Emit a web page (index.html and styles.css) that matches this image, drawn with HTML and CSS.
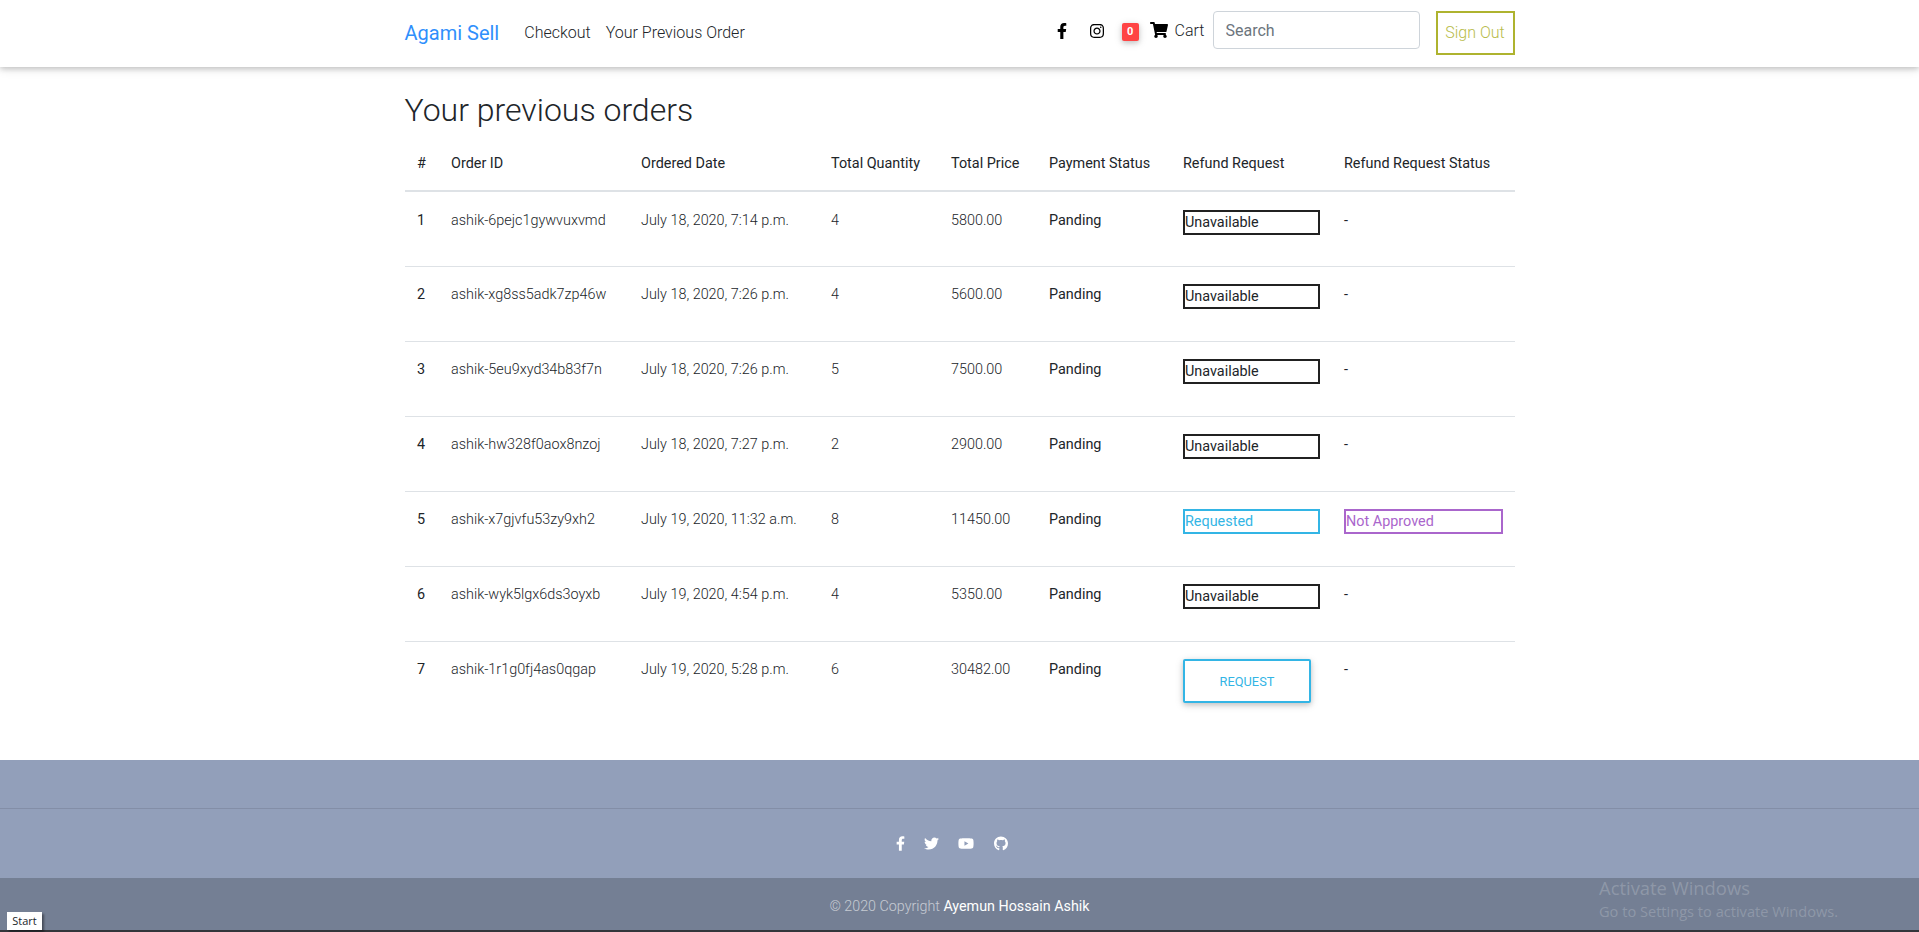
FILE: index.html
```html
<!DOCTYPE html>
<html lang="en">
<head>
    <meta charset="UTF-8">
    <meta name="viewport" content="width=device-width, initial-scale=1.0">
    <title>Your previous orders</title>
    <link rel="stylesheet" href="styles.css">
</head>
<body>
    <svg class="icon-defs" aria-hidden="true">
        <symbol id="i-facebook" viewBox="0 0 320 512"><path d="M279.14 288l14.22-92.66h-88.91v-60.13c0-25.35 12.42-50.06 52.24-50.06h40.42V6.26S260.43 0 225.36 0c-73.22 0-121.08 44.38-121.08 124.72v70.62H22.89V288h81.39v224h100.17V288z"/></symbol>
        <symbol id="i-instagram" viewBox="0 0 448 512"><path d="M224.1 141c-63.6 0-114.9 51.3-114.9 114.9s51.3 114.9 114.9 114.9S339 319.5 339 255.9 287.7 141 224.1 141zm0 189.6c-41.1 0-74.7-33.5-74.7-74.7s33.5-74.7 74.7-74.7 74.7 33.5 74.7 74.7-33.6 74.7-74.7 74.7zm146.4-194.3c0 14.9-12 26.8-26.8 26.8-14.9 0-26.8-12-26.8-26.8s12-26.8 26.8-26.8 26.8 12 26.8 26.8zm76.1 27.2c-1.7-35.9-9.9-67.7-36.2-93.9-26.2-26.2-58-34.4-93.9-36.2-37-2.1-147.9-2.1-184.9 0-35.8 1.7-67.6 9.9-93.9 36.1s-34.4 58-36.2 93.9c-2.1 37-2.1 147.9 0 184.9 1.7 35.9 9.9 67.7 36.2 93.9s58 34.4 93.9 36.2c37 2.1 147.9 2.1 184.9 0 35.9-1.7 67.7-9.9 93.9-36.2 26.2-26.2 34.4-58 36.2-93.9 2.1-37 2.1-147.8 0-184.8zM398.8 388c-7.8 19.6-22.9 34.7-42.6 42.6-29.5 11.7-99.5 9-132.1 9s-102.7 2.6-132.1-9c-19.6-7.8-34.7-22.9-42.6-42.6-11.7-29.5-9-99.5-9-132.1s-2.6-102.7 9-132.1c7.8-19.6 22.9-34.7 42.6-42.6 29.5-11.7 99.5-9 132.1-9s102.7-2.6 132.1 9c19.6 7.8 34.7 22.9 42.6 42.6 11.7 29.5 9 99.5 9 132.1s2.7 102.7-9 132.1z"/></symbol>
        <symbol id="i-cart" viewBox="0 0 576 512"><path d="M528.12 301.319l47.273-208C578.806 78.301 567.391 64 551.99 64H159.208l-9.166-44.81C147.758 8.021 137.93 0 126.529 0H24C10.745 0 0 10.745 0 24v16c0 13.255 10.745 24 24 24h69.883l70.248 343.435C147.325 417.1 136 435.222 136 456c0 30.928 25.072 56 56 56s56-25.072 56-56c0-15.674-6.447-29.835-16.824-40h209.647C430.447 426.165 424 440.326 424 456c0 30.928 25.072 56 56 56s56-25.072 56-56c0-22.172-12.888-41.332-31.579-50.405l5.517-24.276c3.413-15.018-8.002-29.319-23.403-29.319H218.117l-6.545-32h293.145c11.206 0 20.92-7.754 23.403-18.681z"/></symbol>
        <symbol id="i-twitter" viewBox="0 0 512 512"><path d="M459.37 151.716c.325 4.548.325 9.097.325 13.645 0 138.72-105.583 298.558-298.558 298.558-59.452 0-114.68-17.219-161.137-47.106 8.447.974 16.568 1.299 25.34 1.299 49.055 0 94.213-16.568 130.274-44.832-46.132-.975-84.792-31.188-98.112-72.772 6.498.974 12.995 1.624 19.818 1.624 9.421 0 18.843-1.3 27.614-3.573-48.081-9.747-84.143-51.98-84.143-102.985v-1.299c13.969 7.797 30.214 12.67 47.431 13.319-28.264-18.843-46.781-51.005-46.781-87.391 0-19.492 5.197-37.36 14.294-52.954 51.655 63.675 129.3 105.258 216.365 109.807-1.624-7.797-2.599-15.918-2.599-24.04 0-57.828 46.782-104.934 104.934-104.934 30.213 0 57.502 12.67 76.67 33.137 23.715-4.548 46.456-13.32 66.599-25.34-7.798 24.366-24.366 44.833-46.132 57.827 21.117-2.273 41.584-8.122 60.426-16.243-14.292 20.791-32.161 39.308-52.628 54.253z"/></symbol>
        <symbol id="i-youtube" viewBox="0 0 576 512"><path d="M549.655 124.083c-6.281-23.65-24.787-42.276-48.284-48.597C458.781 64 288 64 288 64S117.22 64 74.629 75.486c-23.497 6.322-42.003 24.947-48.284 48.597-11.412 42.867-11.412 132.305-11.412 132.305s0 89.438 11.412 132.305c6.281 23.65 24.787 41.5 48.284 47.821C117.22 448 288 448 288 448s170.78 0 213.371-11.486c23.497-6.321 42.003-24.171 48.284-47.821 11.412-42.867 11.412-132.305 11.412-132.305s0-89.438-11.412-132.305zm-317.51 213.508V175.185l142.739 81.205-142.739 81.201z"/></symbol>
        <symbol id="i-github" viewBox="0 0 496 512"><path d="M165.9 397.4c0 2-2.3 3.6-5.2 3.6-3.3 0-5.6-1.6-5.6-3.6 0-2 2.3-3.6 5.2-3.6 3-.3 5.6 1.3 5.6 3.6zm-31.1-4.5c-.7 2 1.3 4.3 4.3 4.9 2.6 1 5.6 0 6.2-2s-1.3-4.3-4.3-5.2c-2.6-.7-5.5.3-6.2 2.3zm44.2-1.7c-2.9.7-4.9 2.6-4.6 4.9.3 2 2.9 3.3 5.9 2.6 2.9-.7 4.9-2.6 4.6-4.6-.3-1.9-3-3.2-5.9-2.9zM244.8 8C106.1 8 0 113.3 0 252c0 110.9 69.8 205.8 169.5 239.2 12.8 2.3 17.3-5.6 17.3-12.1 0-6.2-.3-40.4-.3-61.4 0 0-70 15-84.7-29.8 0 0-11.4-29.1-27.8-36.6 0 0-22.9-15.7 1.6-15.4 0 0 24.9 2 38.6 25.8 21.9 38.6 58.6 27.5 72.9 20.9 2.3-16 8.8-27.1 16-33.7-55.9-6.2-112.3-14.3-112.3-110.5 0-27.5 7.6-41.3 23.6-58.9-2.6-6.5-11.1-33.3 2.6-67.9 20.9-6.5 69 27 69 27 20-5.6 41.5-8.5 62.8-8.5s42.8 2.9 62.8 8.5c0 0 48.1-33.6 69-27 13.7 34.7 5.2 61.4 2.6 67.9 16 17.7 25.8 31.5 25.8 58.9 0 96.5-58.9 104.2-114.8 110.5 9.2 7.9 17 22.9 17 46.4 0 33.7-.3 75.4-.3 83.6 0 6.5 4.6 14.4 17.3 12.1C428.2 457.8 496 362.9 496 252 496 113.3 383.5 8 244.8 8z"/></symbol>
    </svg>

    <header class="navbar">
        <div class="container nav-inner">
            <a class="brand" href="#">Agami Sell</a>
            <nav class="nav-links">
                <a href="#">Checkout</a>
                <a href="#">Your Previous Order</a>
            </nav>
            <div class="nav-right">
                <a class="nav-icon icon-fb" href="#"><svg><use href="#i-facebook"/></svg></a>
                <a class="nav-icon icon-ig" href="#"><svg><use href="#i-instagram"/></svg></a>
                <span class="cart-badge">0</span>
                <a class="cart-link" href="#"><svg><use href="#i-cart"/></svg><span>Cart</span></a>
                <input class="search" type="text" placeholder="Search">
                <a class="sign-out" href="#">Sign Out</a>
            </div>
        </div>
    </header>

    <main class="container orders">
        <h1>Your previous orders</h1>
        <table class="orders-table">
            <thead>
                <tr>
                    <th class="col-num">#</th>
                    <th class="col-id">Order ID</th>
                    <th class="col-date">Ordered Date</th>
                    <th class="col-qty">Total Quantity</th>
                    <th class="col-price">Total Price</th>
                    <th class="col-pay">Payment Status</th>
                    <th class="col-refund">Refund Request</th>
                    <th class="col-status">Refund Request Status</th>
                </tr>
            </thead>
            <tbody>
                <tr>
                    <th>1</th>
                    <td>ashik-6pejc1gywvuxvmd</td>
                    <td>July 18, 2020, 7:14 p.m.</td>
                    <td>4</td>
                    <td>5800.00</td>
                    <td class="pay">Panding</td>
                    <td><div class="box">Unavailable</div></td>
                    <td class="pay">-</td>
                </tr>
                <tr>
                    <th>2</th>
                    <td>ashik-xg8ss5adk7zp46w</td>
                    <td>July 18, 2020, 7:26 p.m.</td>
                    <td>4</td>
                    <td>5600.00</td>
                    <td class="pay">Panding</td>
                    <td><div class="box">Unavailable</div></td>
                    <td class="pay">-</td>
                </tr>
                <tr>
                    <th>3</th>
                    <td>ashik-5eu9xyd34b83f7n</td>
                    <td>July 18, 2020, 7:26 p.m.</td>
                    <td>5</td>
                    <td>7500.00</td>
                    <td class="pay">Panding</td>
                    <td><div class="box">Unavailable</div></td>
                    <td class="pay">-</td>
                </tr>
                <tr>
                    <th>4</th>
                    <td>ashik-hw328f0aox8nzoj</td>
                    <td>July 18, 2020, 7:27 p.m.</td>
                    <td>2</td>
                    <td>2900.00</td>
                    <td class="pay">Panding</td>
                    <td><div class="box">Unavailable</div></td>
                    <td class="pay">-</td>
                </tr>
                <tr>
                    <th>5</th>
                    <td>ashik-x7gjvfu53zy9xh2</td>
                    <td>July 19, 2020, 11:32 a.m.</td>
                    <td>8</td>
                    <td>11450.00</td>
                    <td class="pay">Panding</td>
                    <td><div class="box box-blue">Requested</div></td>
                    <td><div class="box box-purple">Not Approved</div></td>
                </tr>
                <tr>
                    <th>6</th>
                    <td>ashik-wyk5lgx6ds3oyxb</td>
                    <td>July 19, 2020, 4:54 p.m.</td>
                    <td>4</td>
                    <td>5350.00</td>
                    <td class="pay">Panding</td>
                    <td><div class="box">Unavailable</div></td>
                    <td class="pay">-</td>
                </tr>
                <tr>
                    <th>7</th>
                    <td>ashik-1r1g0fj4as0qgap</td>
                    <td>July 19, 2020, 5:28 p.m.</td>
                    <td>6</td>
                    <td>30482.00</td>
                    <td class="pay">Panding</td>
                    <td><button class="request-btn">Request</button></td>
                    <td class="pay">-</td>
                </tr>
            </tbody>
        </table>
    </main>

    <footer class="footer">
        <div class="footer-social">
            <a class="social-fb" href="#"><svg><use href="#i-facebook"/></svg></a>
            <a class="social-tw" href="#"><svg><use href="#i-twitter"/></svg></a>
            <a class="social-yt" href="#"><svg><use href="#i-youtube"/></svg></a>
            <a class="social-gh" href="#"><svg><use href="#i-github"/></svg></a>
        </div>
        <div class="copyright">© 2020 Copyright <a href="#">Ayemun Hossain Ashik</a></div>
    </footer>
    <div class="screen-edge"></div>

    <div class="start-tip">Start</div>
    <div class="activate">
        <div class="activate-title">Activate Windows</div>
        <div class="activate-sub">Go to Settings to activate Windows.</div>
    </div>
</body>
</html>
```
FILE: styles.css
```css
* {
    box-sizing: border-box;
}
html, body {
    margin: 0;
    padding: 0;
}
body {
    position: relative;
    font-family: Roboto, "Liberation Sans", sans-serif;
    font-weight: 300;
    color: #212529;
    background: #fff;
    overflow: hidden;
}
a {
    color: inherit;
    text-decoration: none;
}
.icon-defs {
    display: none;
}
.container {
    width: 1140px;
    margin: 0 auto;
    padding: 0 15px;
}

/* navbar */
.navbar {
    height: 67px;
    background: #fff;
    box-shadow: 0 2px 5px 0 rgba(0, 0, 0, 0.16), 0 2px 10px 0 rgba(0, 0, 0, 0.12);
}
.nav-inner {
    display: flex;
    align-items: flex-start;
    height: 67px;
}
.brand {
    margin-top: 19px;
    font-size: 20px;
    line-height: 28px;
    color: #2f8ffc;
    font-weight: 400;
}
.nav-links {
    display: flex;
    gap: 15px;
    margin-top: 21px;
    margin-left: 25px;
    font-size: 16px;
    line-height: 24px;
}
.nav-right {
    display: flex;
    align-items: flex-start;
    margin-left: auto;
}
.nav-icon svg {
    display: block;
    width: 100%;
    height: 100%;
}
.icon-fb {
    width: 10px;
    height: 16px;
    margin-top: 23px;
}
.icon-ig {
    width: 14px;
    height: 16px;
    margin-top: 23px;
    margin-left: 23px;
}
.cart-badge {
    width: 17px;
    height: 18px;
    margin-top: 23px;
    margin-left: 18px;
    background: #ff4444;
    border-radius: 2px;
    box-shadow: 0 2px 5px 0 rgba(0, 0, 0, 0.16), 0 2px 10px 0 rgba(0, 0, 0, 0.12);
    color: #fff;
    font-size: 11px;
    font-weight: 700;
    line-height: 18px;
    text-align: center;
}
.cart-link {
    display: flex;
    margin-top: 19px;
    margin-left: 11px;
    font-size: 16px;
    line-height: 24px;
}
.cart-link svg {
    width: 18px;
    height: 16px;
    margin-top: 3px;
    margin-right: 7px;
}
.search {
    width: 207px;
    height: 38px;
    margin-top: 11px;
    margin-left: 8px;
    padding: 6px 12px;
    border: 1px solid #ced4da;
    border-radius: 4px;
    font-family: inherit;
    font-size: 16px;
    font-weight: 400;
    color: #495057;
}
.search::placeholder {
    color: #6c757d;
    opacity: 1;
}
.sign-out {
    width: 79px;
    height: 44px;
    margin-top: 11px;
    margin-left: 16px;
    border: 2px solid #aeb32f;
    color: #b8bc4a;
    font-size: 16px;
    line-height: 40px;
    text-align: center;
}

/* orders */
.orders {
    height: 693px;
    padding-top: 20px;
}
h1 {
    margin: 0;
    font-size: 32px;
    font-weight: 300;
    line-height: 46px;
}
.orders-table {
    width: 1110px;
    border-collapse: collapse;
    table-layout: fixed;
    font-size: 14.4px;
}
.orders-table th,
.orders-table td {
    padding: 17.6px 12px 0 12.5px;
    vertical-align: top;
    text-align: left;
    line-height: 21.6px;
    white-space: nowrap;
}
.orders-table th {
    font-weight: 400;
}
.orders-table thead th {
    height: 58px;
    padding-top: 20px;
    border-bottom: 2px solid #dee2e6;
}
.orders-table tbody tr {
    height: 75px;
}
.orders-table tbody tr + tr th,
.orders-table tbody tr + tr td {
    border-top: 1px solid #dee2e6;
}
.col-num { width: 34px; }
.col-id { width: 190px; }
.col-date { width: 190px; }
.col-qty { width: 120px; }
.col-price { width: 98px; }
.col-pay { width: 134px; }
.col-refund { width: 161px; }
.col-status { width: 183px; }
.orders-table .pay {
    font-weight: 400;
}
.box {
    width: 137px;
    height: 25px;
    border: 2px solid #212121;
    font-weight: 400;
    font-size: 14.4px;
    line-height: 21px;
    color: #212529;
}
.box-blue {
    border-color: #33b5e5;
    color: #33b5e5;
}
.box-purple {
    width: 159px;
    border-color: #aa66cc;
    color: #aa66cc;
}
.request-btn {
    display: block;
    width: 128px;
    height: 44px;
    border: 2px solid #33b5e5;
    border-radius: 2px;
    background: #fff;
    box-shadow: 0 2px 5px 0 rgba(0, 0, 0, 0.16), 0 2px 10px 0 rgba(0, 0, 0, 0.12);
    color: #33b5e5;
    font-family: inherit;
    font-size: 12.8px;
    font-weight: 400;
    text-transform: uppercase;
    cursor: pointer;
}

/* footer */
.footer {
    height: 170px;
    background: #929fba;
    padding-top: 48px;
}
.footer-social {
    display: flex;
    justify-content: center;
    align-items: center;
    height: 70px;
    padding-right: 15px;
    border-top: 1px solid rgba(0, 0, 0, 0.1);
    fill: #fff;
}
.footer-social a {
    display: block;
    height: 15px;
}
.footer-social svg {
    display: block;
    width: 100%;
    height: 100%;
}
.social-fb { width: 9px; }
.social-tw { width: 15px; margin-left: 19px; }
.social-yt { width: 16px; margin-left: 19px; }
.social-gh { width: 14px; margin-left: 20px; }
.copyright {
    height: 52px;
    background: rgba(0, 0, 0, 0.2);
    color: rgba(255, 255, 255, 0.6);
    font-size: 14.3px;
    line-height: 56px;
    text-align: center;
}
.copyright a {
    color: #fff;
    font-weight: 400;
}
.screen-edge {
    height: 2px;
    background: #33363b;
}

/* overlays */
.start-tip {
    position: absolute;
    left: 7px;
    top: 912px;
    width: 35px;
    height: 18px;
    background: #fff;
    box-shadow: 2px 2px 2px rgba(0, 0, 0, 0.4);
    font-family: "Open Sans", sans-serif;
    font-size: 11px;
    font-weight: 400;
    line-height: 18px;
    text-align: center;
}
.activate {
    position: absolute;
    left: 1599px;
    top: 874px;
    font-family: "Open Sans", sans-serif;
    color: rgba(255, 255, 255, 0.2);
    font-weight: 400;
}
.activate-title {
    font-size: 18.4px;
    line-height: 28px;
}
.activate-sub {
    font-size: 14.6px;
    line-height: 18px;
}
```
